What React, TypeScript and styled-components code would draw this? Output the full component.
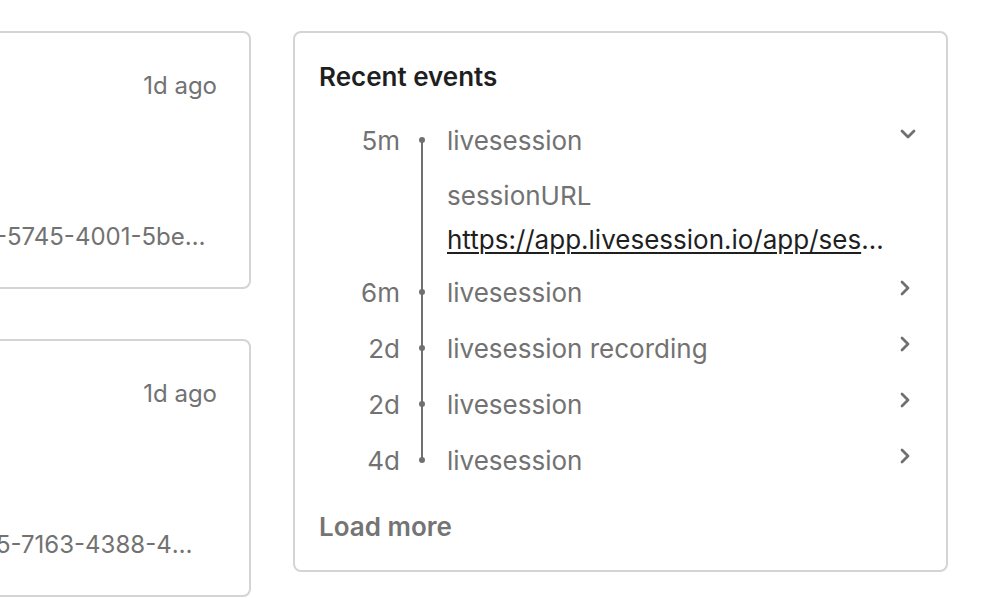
import React from "react";
import styled, { createGlobalStyle } from "styled-components";

const GlobalStyle = createGlobalStyle`
  html, body {
    margin: 0;
    padding: 0;
    background: #ffffff;
    overflow: hidden;
  }
  body {
    font-family: Inter, "Noto Sans", "Liberation Sans", sans-serif;
    color: #707070;
  }
  * {
    box-sizing: border-box;
  }
`;

const Page = styled.div`
  display: flex;
  align-items: flex-start;
  gap: 42px;
  padding-top: 31px;
  width: 998px;
  height: 598px;
  overflow: hidden;
`;

// left column is partly scrolled out of view on the left
const LeftColumn = styled.div`
  display: flex;
  flex-direction: column;
  gap: 50px;
  width: 251px;
  flex: none;
`;

const Card = styled.div`
  border: 2px solid #d4d4d4;
  border-radius: 8px;
  background: #fff;
`;

const PersonCard = styled(Card)`
  width: 395px;
  margin-left: -144px;
  height: 258px;
  padding: 39px 32px 36px 26px;
  display: flex;
  flex-direction: column;
  justify-content: space-between;
`;

const Ago = styled.div`
  align-self: flex-end;
  font-size: 24px;
  line-height: 28px;
  color: #727272;
`;

const Distinct = styled.div<{ $width: number }>`
  width: ${(p) => p.$width}px;
  font-size: 24px;
  line-height: 28px;
  color: #727272;
  white-space: nowrap;
  overflow: hidden;
  text-overflow: ellipsis;
`;

const EventsCard = styled(Card)`
  flex: none;
  width: 655px;
  height: 541px;
  padding: 24px 24px 0 24px;
`;

const Title = styled.h2`
  margin: 0 0 15px 0;
  font-size: 26px;
  line-height: 40px;
  font-weight: 600;
  color: #1f1f1f;
`;

const Timeline = styled.div`
  display: flex;
  flex-direction: column;
`;

const Entry = styled.div`
  display: grid;
  grid-template-columns: 81px 47px 1fr 40px;
`;

const Time = styled.div`
  height: 56px;
  display: flex;
  align-items: center;
  justify-content: flex-end;
  font-size: 26px;
  color: #727272;
`;

const Rail = styled.div<{ $first?: boolean; $last?: boolean }>`
  position: relative;
  grid-row: span 2;
  &::before {
    content: "";
    position: absolute;
    left: 21px;
    width: 2px;
    background: #707070;
    top: ${(p) => (p.$first ? "28px" : "0")};
    bottom: ${(p) => (p.$last ? "auto" : "0")};
    height: ${(p) => (p.$last ? "30px" : "auto")};
  }
`;

const Dot = styled.span`
  position: absolute;
  left: 19px;
  top: 25px;
  width: 6px;
  height: 6px;
  border-radius: 50%;
  background: #707070;
`;

const Name = styled.div`
  height: 56px;
  display: flex;
  align-items: center;
  font-size: 26px;
  color: #727272;
  white-space: nowrap;
`;

const Toggle = styled.div<{ $open?: boolean }>`
  height: 56px;
  display: flex;
  align-items: center;
  justify-content: flex-end;
  padding-right: ${(p) => (p.$open ? "6px" : "12px")};
  padding-bottom: ${(p) => (p.$open ? "13px" : "9px")};
  color: #707070;
`;

const Details = styled.div`
  grid-column: 3 / 5;
  padding: 8px 0 4px 0;
  display: flex;
  flex-direction: column;
  gap: 4px;
  min-width: 0;
`;

const PropKey = styled.div`
  font-size: 26px;
  line-height: 40px;
  color: #727272;
`;

const PropLink = styled.a`
  display: block;
  width: 444px;
  font-size: 26px;
  line-height: 40px;
  color: #1f1f1f;
  text-decoration: underline;
  text-decoration-thickness: 2px;
  text-underline-offset: 3px;
  white-space: nowrap;
  overflow: hidden;
  text-overflow: ellipsis;
`;

const LoadMore = styled.button`
  display: block;
  margin-top: 21px;
  padding: 0;
  border: none;
  background: none;
  font-family: inherit;
  font-size: 26px;
  line-height: 36px;
  font-weight: 600;
  color: #747474;
  cursor: pointer;
`;

const ChevronDown = () => (
  <svg width="16" height="10" viewBox="0 0 16 10" fill="none">
    <path d="M2 2l6 6 6-6" stroke="currentColor" strokeWidth="2.8" strokeLinecap="round" strokeLinejoin="round" />
  </svg>
);

const ChevronRight = () => (
  <svg width="10" height="16" viewBox="0 0 10 16" fill="none">
    <path d="M2 2l6 6-6 6" stroke="currentColor" strokeWidth="2.8" strokeLinecap="round" strokeLinejoin="round" />
  </svg>
);

const people = [
  { ago: "1d ago", id: "0188a2c4-5745-4001-5be3-b1f0e7d2a9c6", width: 333 },
  { ago: "1d ago", id: "0188a2c45-7163-4388-4d2a-9d0c1e6b3a78", width: 322 },
];

const events = [
  { time: "5m", name: "livesession", open: true, url: "https://app.livesession.io/app/session/8a7c2f1e-44b1-4f0e-9a3d" },
  { time: "6m", name: "livesession" },
  { time: "2d", name: "livesession recording" },
  { time: "2d", name: "livesession" },
  { time: "4d", name: "livesession" },
];

const App = () => {
  return (
    <>
      <GlobalStyle />
      <Page>
        <LeftColumn>
          {people.map((p, i) => (
            <PersonCard key={i}>
              <Ago>{p.ago}</Ago>
              <Distinct $width={p.width}>{p.id}</Distinct>
            </PersonCard>
          ))}
        </LeftColumn>

        <EventsCard>
          <Title>Recent events</Title>
          <Timeline>
            {events.map((ev, i) => (
              <Entry key={i}>
                <Time>{ev.time}</Time>
                <Rail $first={i === 0} $last={i === events.length - 1}>
                  <Dot />
                </Rail>
                <Name>{ev.name}</Name>
                <Toggle $open={ev.open}>{ev.open ? <ChevronDown /> : <ChevronRight />}</Toggle>
                {ev.open && (
                  <Details>
                    <PropKey>sessionURL</PropKey>
                    <PropLink href="#">{ev.url}</PropLink>
                  </Details>
                )}
              </Entry>
            ))}
          </Timeline>
          <LoadMore>Load more</LoadMore>
        </EventsCard>
      </Page>
    </>
  );
};

export default App;
